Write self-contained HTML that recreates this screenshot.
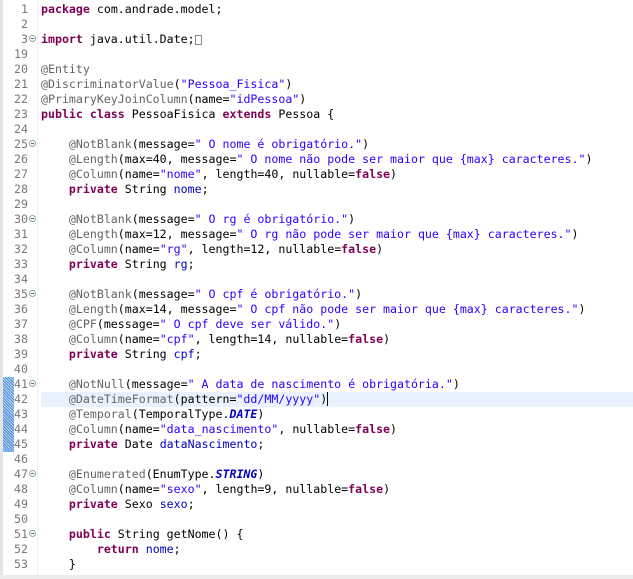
<!DOCTYPE html>
<html><head><meta charset="utf-8"><style>
body{margin:0;width:633px;height:579px;background:#fff;overflow:hidden;position:relative;font-family:"DejaVu Sans Mono","Liberation Mono",monospace;font-size:11.6px;}
.gut{position:absolute;left:0;top:0;width:3px;height:579px;background:#e4e4e4}
.g2{position:absolute;left:37px;top:0;width:1px;height:579px;background:#f0f0f0}
.hatch{position:absolute;left:3px;top:377px;width:11px;height:75px;background:repeating-linear-gradient(45deg,#4a8ed8 0 1px,#b8d4f0 1px 2px)}
.cur{position:absolute;left:41px;top:392px;width:592px;height:15px;background:#e8f2fe}
.bot{position:absolute;left:0;top:575px;width:633px;height:4px;background:#ececec}
.l{position:absolute;left:0;height:15px;line-height:15px;white-space:pre;width:633px}
.n{position:absolute;right:605px;color:#787878;text-align:right}
.c{position:absolute;left:41px;color:#000}
.f{position:absolute;left:29px;top:3px;width:7px;height:7px;border:1px solid #8aa;border-radius:50%;box-sizing:border-box;}
.f:after{content:"";position:absolute;left:1px;top:2px;width:3px;height:1px;background:#567}
.k{color:#7f0055;font-weight:bold}.s{color:#2a00ff}.a{color:#646464}.v{color:#0000c0}.e{color:#0000c0;font-weight:bold;font-style:italic}
</style></head><body>
<div class="gut"></div><div class="g2"></div><div class="hatch"></div><div class="cur"></div><div class="bot"></div>
<div class="l" style="top:2px"><span class="n">1</span><span class="c"><span class="k">package</span> com.andrade.model;</span></div>
<div class="l" style="top:17px"><span class="n">2</span></div>
<div class="l" style="top:32px"><span class="n">3</span><span class="f"></span><span class="c"><span class="k">import</span> java.util.Date;<span style="display:inline-block;width:7px;height:10px;border:1px solid #888;vertical-align:-2px;box-sizing:border-box"></span></span></div>
<div class="l" style="top:47px"><span class="n">19</span></div>
<div class="l" style="top:62px"><span class="n">20</span><span class="c"><span class="a">@Entity</span></span></div>
<div class="l" style="top:77px"><span class="n">21</span><span class="c"><span class="a">@DiscriminatorValue</span>(<span class="s">"Pessoa_Fisica"</span>)</span></div>
<div class="l" style="top:92px"><span class="n">22</span><span class="c"><span class="a">@PrimaryKeyJoinColumn</span>(name=<span class="s">"idPessoa"</span>)</span></div>
<div class="l" style="top:107px"><span class="n">23</span><span class="c"><span class="k">public class</span> PessoaFisica <span class="k">extends</span> Pessoa {</span></div>
<div class="l" style="top:122px"><span class="n">24</span></div>
<div class="l" style="top:137px"><span class="n">25</span><span class="f"></span><span class="c">    <span class="a">@NotBlank</span>(message=<span class="s">" O nome é obrigatório."</span>)</span></div>
<div class="l" style="top:152px"><span class="n">26</span><span class="c">    <span class="a">@Length</span>(max=40, message=<span class="s">" O nome não pode ser maior que {max} caracteres."</span>)</span></div>
<div class="l" style="top:167px"><span class="n">27</span><span class="c">    <span class="a">@Column</span>(name=<span class="s">"nome"</span>, length=40, nullable=<span class="k">false</span>)</span></div>
<div class="l" style="top:182px"><span class="n">28</span><span class="c">    <span class="k">private</span> String <span class="v">nome</span>;</span></div>
<div class="l" style="top:197px"><span class="n">29</span></div>
<div class="l" style="top:212px"><span class="n">30</span><span class="f"></span><span class="c">    <span class="a">@NotBlank</span>(message=<span class="s">" O rg é obrigatório."</span>)</span></div>
<div class="l" style="top:227px"><span class="n">31</span><span class="c">    <span class="a">@Length</span>(max=12, message=<span class="s">" O rg não pode ser maior que {max} caracteres."</span>)</span></div>
<div class="l" style="top:242px"><span class="n">32</span><span class="c">    <span class="a">@Column</span>(name=<span class="s">"rg"</span>, length=12, nullable=<span class="k">false</span>)</span></div>
<div class="l" style="top:257px"><span class="n">33</span><span class="c">    <span class="k">private</span> String <span class="v">rg</span>;</span></div>
<div class="l" style="top:272px"><span class="n">34</span></div>
<div class="l" style="top:287px"><span class="n">35</span><span class="f"></span><span class="c">    <span class="a">@NotBlank</span>(message=<span class="s">" O cpf é obrigatório."</span>)</span></div>
<div class="l" style="top:302px"><span class="n">36</span><span class="c">    <span class="a">@Length</span>(max=14, message=<span class="s">" O cpf não pode ser maior que {max} caracteres."</span>)</span></div>
<div class="l" style="top:317px"><span class="n">37</span><span class="c">    <span class="a">@CPF</span>(message=<span class="s">" O cpf deve ser válido."</span>)</span></div>
<div class="l" style="top:332px"><span class="n">38</span><span class="c">    <span class="a">@Column</span>(name=<span class="s">"cpf"</span>, length=14, nullable=<span class="k">false</span>)</span></div>
<div class="l" style="top:347px"><span class="n">39</span><span class="c">    <span class="k">private</span> String <span class="v">cpf</span>;</span></div>
<div class="l" style="top:362px"><span class="n">40</span></div>
<div class="l" style="top:377px"><span class="n">41</span><span class="f"></span><span class="c">    <span class="a">@NotNull</span>(message=<span class="s">" A data de nascimento é obrigatória."</span>)</span></div>
<div class="l" style="top:392px"><span class="n">42</span><span class="c">    <span class="a">@DateTimeFormat</span>(pattern=<span class="s">"dd/MM/yyyy"</span>)<span style="display:inline-block;width:1px;height:14px;background:#000;vertical-align:-3px"></span></span></div>
<div class="l" style="top:407px"><span class="n">43</span><span class="c">    <span class="a">@Temporal</span>(TemporalType.<span class="e">DATE</span>)</span></div>
<div class="l" style="top:422px"><span class="n">44</span><span class="c">    <span class="a">@Column</span>(name=<span class="s">"data_nascimento"</span>, nullable=<span class="k">false</span>)</span></div>
<div class="l" style="top:437px"><span class="n">45</span><span class="c">    <span class="k">private</span> Date <span class="v">dataNascimento</span>;</span></div>
<div class="l" style="top:452px"><span class="n">46</span></div>
<div class="l" style="top:467px"><span class="n">47</span><span class="f"></span><span class="c">    <span class="a">@Enumerated</span>(EnumType.<span class="e">STRING</span>)</span></div>
<div class="l" style="top:482px"><span class="n">48</span><span class="c">    <span class="a">@Column</span>(name=<span class="s">"sexo"</span>, length=9, nullable=<span class="k">false</span>)</span></div>
<div class="l" style="top:497px"><span class="n">49</span><span class="c">    <span class="k">private</span> Sexo <span class="v">sexo</span>;</span></div>
<div class="l" style="top:512px"><span class="n">50</span></div>
<div class="l" style="top:527px"><span class="n">51</span><span class="f"></span><span class="c">    <span class="k">public</span> String getNome() {</span></div>
<div class="l" style="top:542px"><span class="n">52</span><span class="c">        <span class="k">return</span> <span class="v">nome</span>;</span></div>
<div class="l" style="top:557px"><span class="n">53</span><span class="c">    }</span></div>
</body></html>
